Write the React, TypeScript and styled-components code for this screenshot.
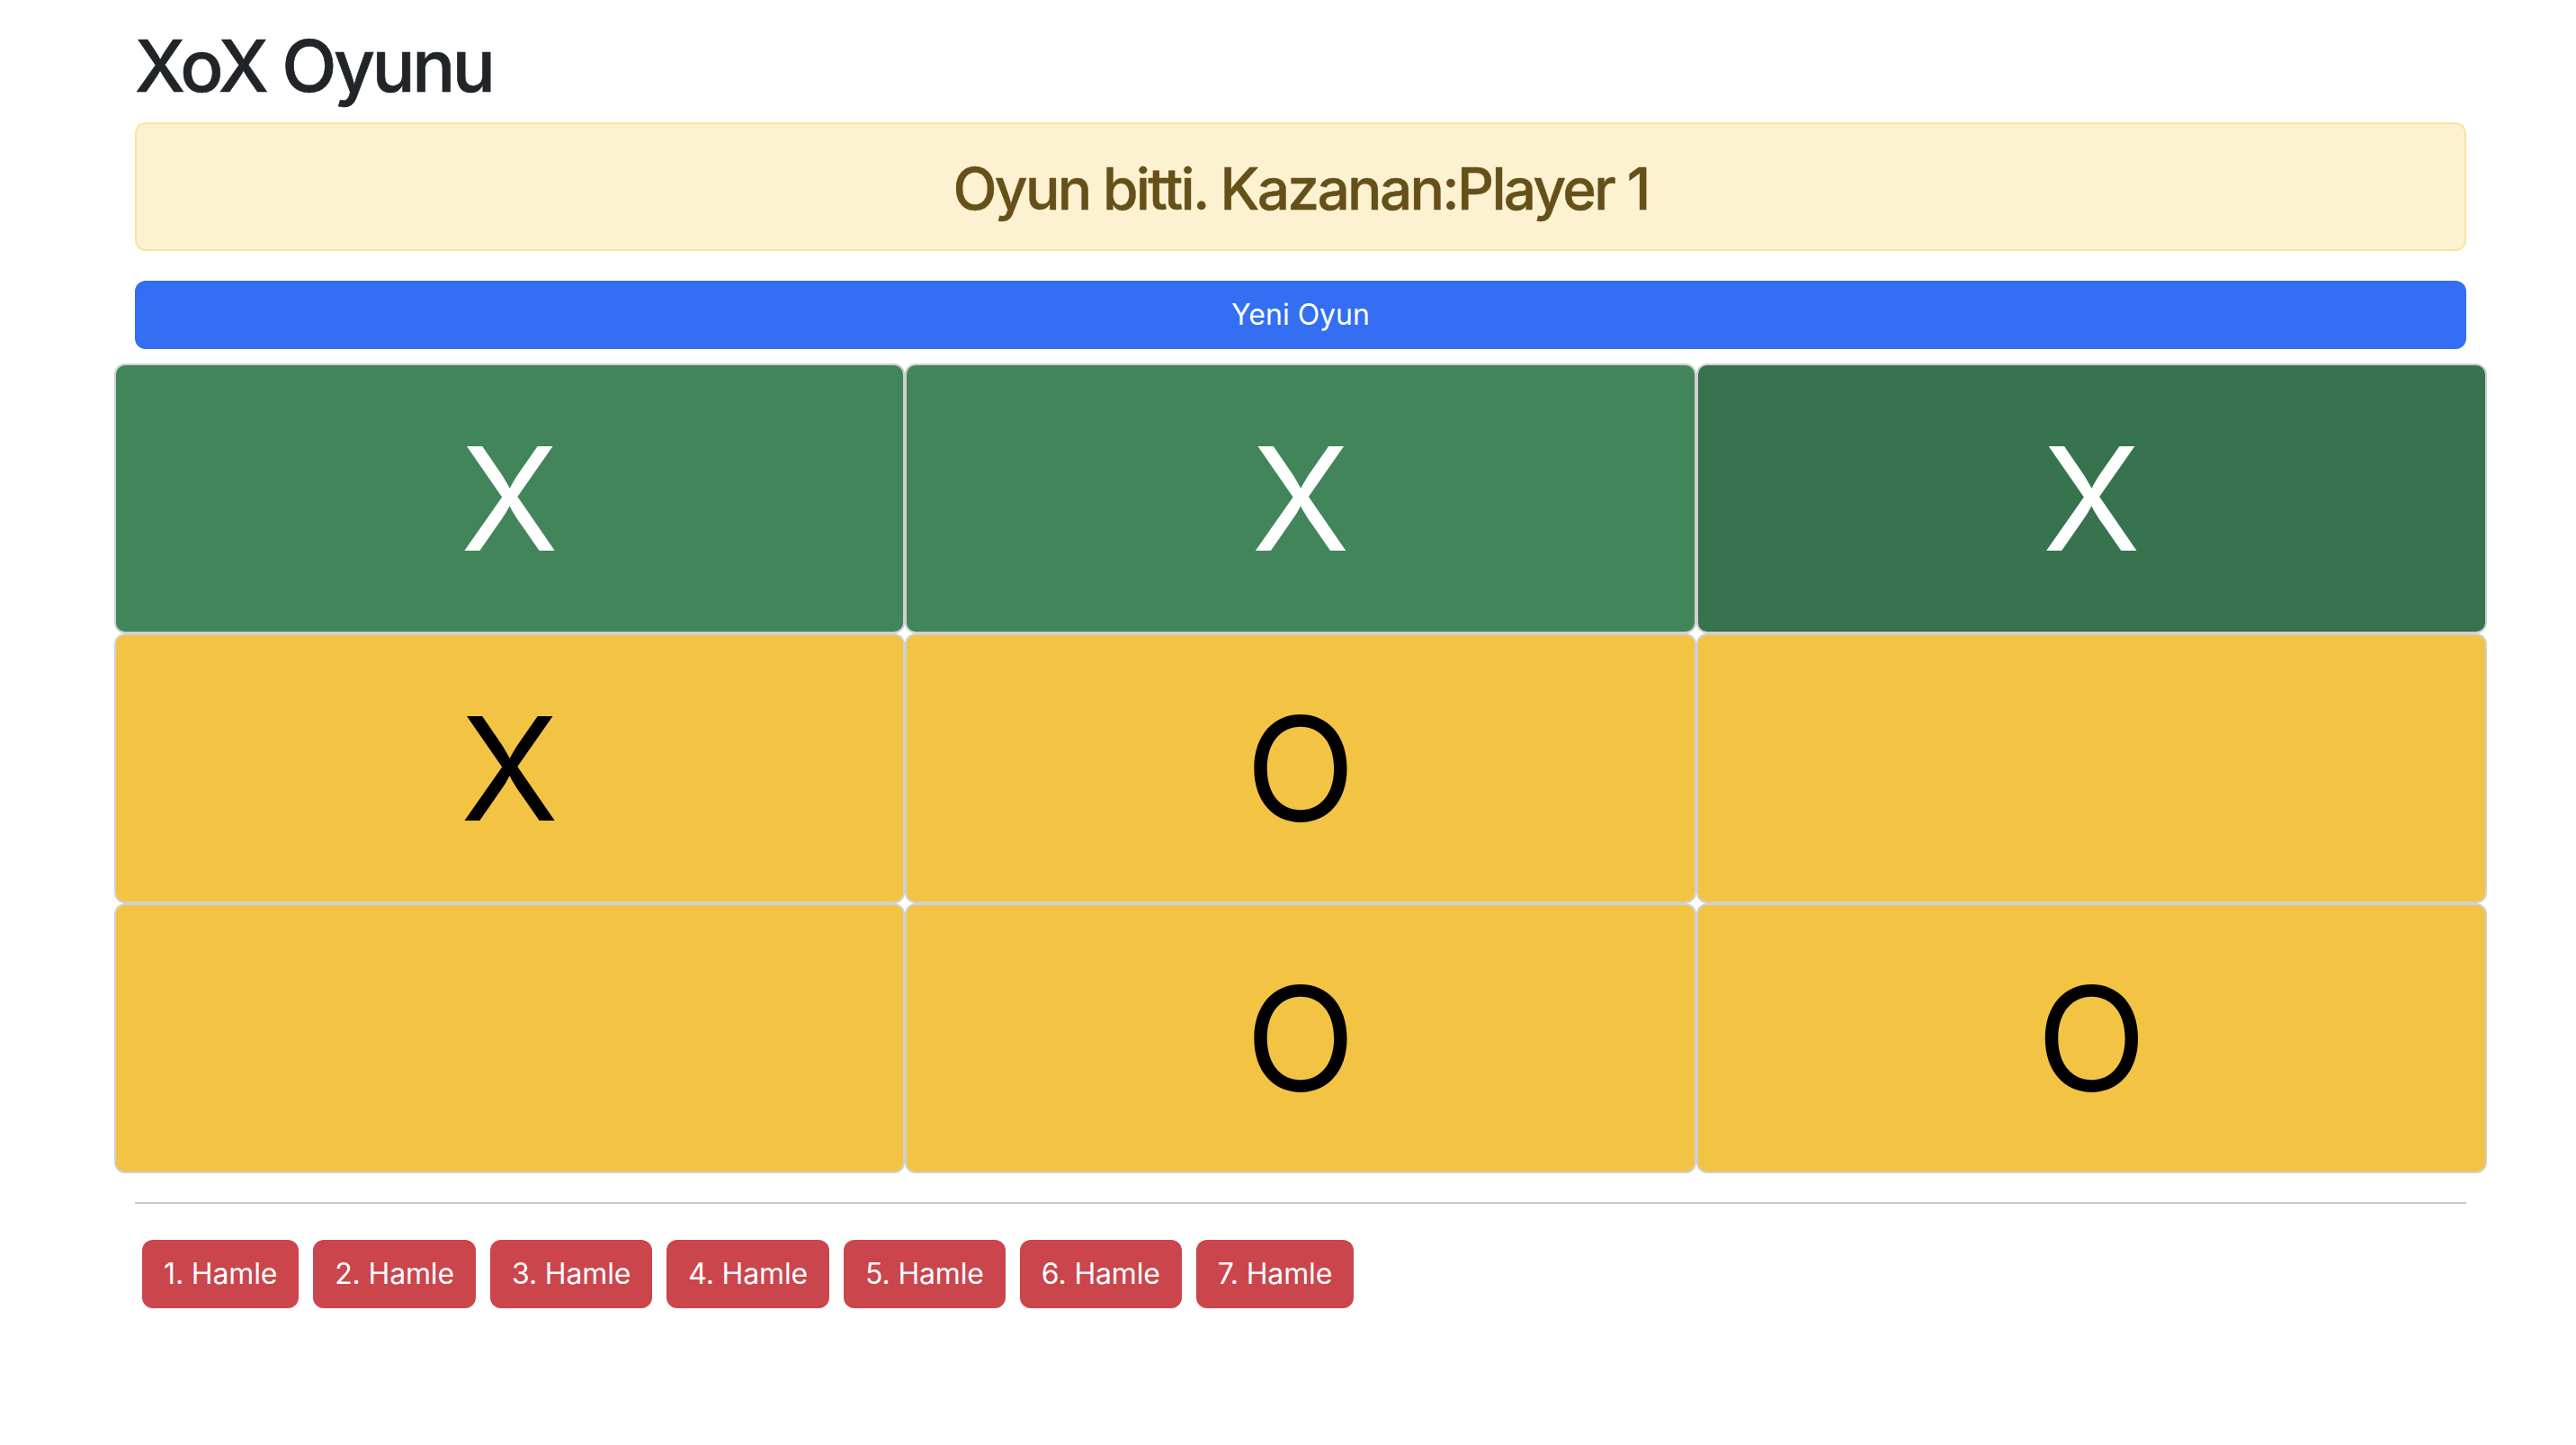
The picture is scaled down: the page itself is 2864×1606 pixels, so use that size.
import React from "react";
import styled, { createGlobalStyle } from "styled-components";

const GlobalStyle = createGlobalStyle`
  html, body {
    margin: 0;
    padding: 0;
    background: #ffffff;
  }
  body {
    font-family: Inter, "Noto Sans", "Liberation Sans", sans-serif;
    color: #212529;
  }
  * { box-sizing: border-box; }
`;

const Container = styled.main`
  width: 2592px;
  margin-left: 150px;
  padding-top: 25px;
`;

const Title = styled.h1`
  margin: 0 0 15px;
  font-size: 80px;
  font-weight: 500;
  line-height: 96px;
  color: #212529;
  letter-spacing: -3.5px;
  -webkit-text-stroke: 0.6px #212529;
`;

const Alert = styled.div`
  border: 2px solid #fbe4a1;
  background: #fcf2d1;
  border-radius: 12px;
  padding: 33px 32px 29px;
  text-align: center;
`;

const AlertHeading = styled.h2`
  margin: 0;
  font-size: 64px;
  font-weight: 500;
  line-height: 77px;
  color: #665019;
  letter-spacing: -2.7px;
  -webkit-text-stroke: 0.4px #665019;
`;

const PrimaryButton = styled.button`
  display: block;
  width: 100%;
  height: 76px;
  margin-top: 33px;
  border: none;
  border-radius: 12px;
  background: #336ef3;
  color: #ffffff;
  font-family: inherit;
  font-size: 32px;
  line-height: 48px;
  cursor: pointer;
`;

const Board = styled.div`
  margin: 16px -23px 0;
  display: grid;
  grid-template-columns: repeat(3, 1fr);
  grid-auto-rows: 300px;
`;

type Tone = "win" | "winActive" | "plain";

const toneBg: Record<Tone, string> = {
  win: "#42855b",
  winActive: "#37734e",
  plain: "#f3c343",
};

const Cell = styled.button<{ $tone: Tone }>`
  display: flex;
  align-items: center;
  justify-content: center;
  border: 2px solid #d0d0d0;
  border-radius: 12px;
  background: ${(p) => toneBg[p.$tone]};
  color: ${(p) => (p.$tone === "plain" ? "#000000" : "#ffffff")};
  font-family: inherit;
  font-size: 160px;
  font-weight: 400;
  line-height: 1;
  padding: 0;
  cursor: pointer;
`;

const Divider = styled.hr`
  margin: 32px 0 32px;
  border: 0;
  border-top: 2px solid #c9c9c9;
`;

const MoveList = styled.div`
  display: flex;
  flex-wrap: wrap;
`;

const MoveButton = styled.button`
  margin: 8px;
  height: 76px;
  padding: 0 24px;
  border: none;
  border-radius: 12px;
  background: #cb454c;
  color: #ffffff;
  font-family: inherit;
  font-size: 32px;
  line-height: 48px;
  letter-spacing: -0.15px;
  cursor: pointer;
`;

const cells: { v: string; tone: Tone }[] = [
  { v: "X", tone: "win" },
  { v: "X", tone: "win" },
  { v: "X", tone: "winActive" },
  { v: "X", tone: "plain" },
  { v: "O", tone: "plain" },
  { v: "", tone: "plain" },
  { v: "", tone: "plain" },
  { v: "O", tone: "plain" },
  { v: "O", tone: "plain" },
];

export default function App() {
  return (
    <>
      <GlobalStyle />
      <Container>
        <Title>XoX Oyunu</Title>
        <Alert>
          <AlertHeading>Oyun bitti. Kazanan:Player 1</AlertHeading>
        </Alert>
        <PrimaryButton>Yeni Oyun</PrimaryButton>
        <Board>
          {cells.map((c, i) => (
            <Cell key={i} $tone={c.tone}>
              {c.v}
            </Cell>
          ))}
        </Board>
        <Divider />
        <MoveList>
          {Array.from({ length: 7 }, (_, i) => (
            <MoveButton key={i}>{i + 1}. Hamle</MoveButton>
          ))}
        </MoveList>
      </Container>
    </>
  );
}
